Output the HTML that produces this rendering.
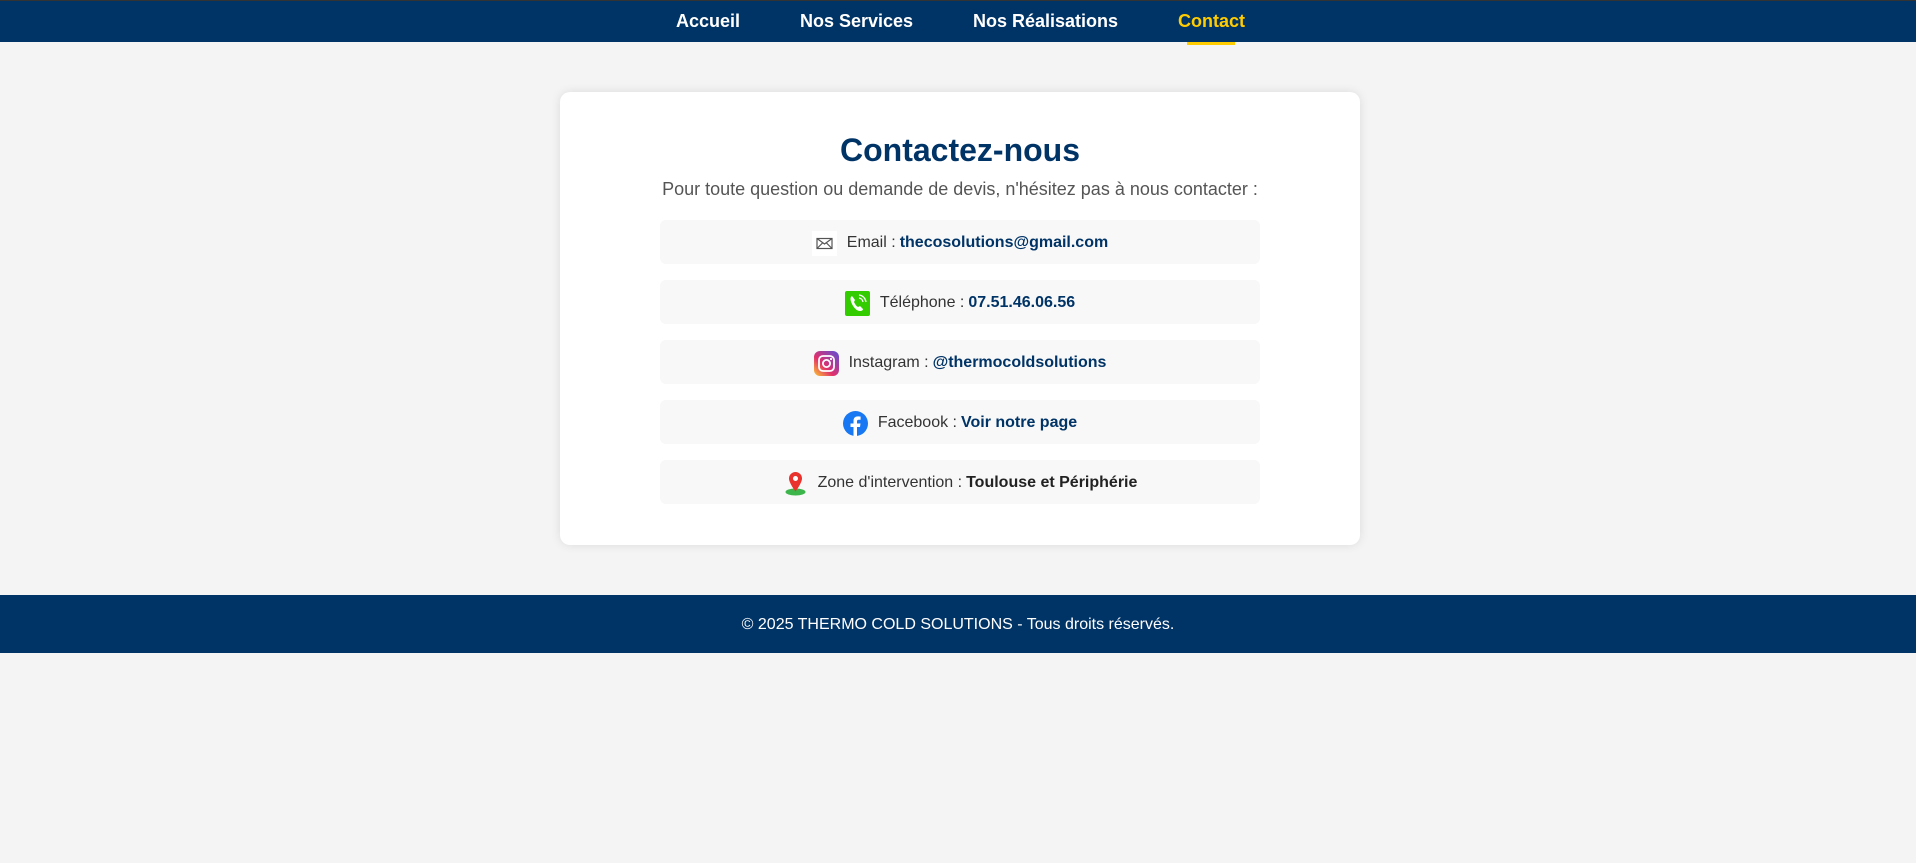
<!DOCTYPE html>
<html><head><meta charset="utf-8"><style>
*{margin:0;padding:0;box-sizing:border-box}
body{width:1916px;height:863px;background:#f4f4f4;font-family:"Liberation Sans",Arial,sans-serif;overflow:hidden}
nav{height:42px;background:#003366;border-top:1px solid #333;position:relative}
nav a{position:absolute;top:10px;font-size:18px;font-weight:bold;color:#fff;text-decoration:none}
nav a.act{color:#ffcc00}
.ul{position:absolute;left:1187px;top:42px;width:48px;height:3px;background:#ffcc00}
.card{position:absolute;left:560px;top:92px;width:800px;height:453px;background:#fff;border-radius:10px;box-shadow:0 0 10px rgba(0,0,0,0.1)}
h1{position:absolute;left:0;width:100%;text-align:center;top:39px;font-size:32px;color:#003366;line-height:38px}
.sub{position:absolute;top:86px;width:100%;text-align:center;font-size:18px;color:#555;line-height:22px}
.row{position:absolute;left:100px;width:600px;height:44px;background:#f8f8f8;border-radius:6px;display:flex;align-items:center;justify-content:center;font-size:16px;color:#333;padding-top:2px}
.row b{color:#003366;margin-left:4px}
.row b.d{color:#222}
.ic{width:25px;height:25px;margin-right:10px;display:inline-block}
footer{position:absolute;left:0;top:595px;width:1916px;height:58px;background:#003366;color:#fff;font-size:16px;text-align:center;line-height:60px}
</style></head><body>
<nav>
<a style="left:676px">Accueil</a>
<a style="left:800px">Nos Services</a>
<a style="left:973px">Nos Réalisations</a>
<a class="act" style="left:1178px">Contact</a>
</nav>
<div class="ul"></div>
<div class="card">
<h1>Contactez-nous</h1>
<div class="sub">Pour toute question ou demande de devis, n'hésitez pas à nous contacter :</div>
<div class="row" style="top:128px"><svg class="ic" viewBox="0 0 25 25"><rect width="25" height="25" fill="#fff"/><rect x="5" y="7.5" width="15" height="10" fill="none" stroke="#555" stroke-width="1.2"/><path d="M5 7.5L12.5 13L20 7.5M5 17.5L10.5 12M20 17.5L14.5 12" fill="none" stroke="#555" stroke-width="1.2"/></svg>Email :<b>thecosolutions@gmail.com</b></div>
<div class="row" style="top:188px"><svg class="ic" viewBox="0 0 25 25"><rect width="25" height="25" rx="2" fill="#33cc00"/><path d="M7 5c-2 1-2 4 0 8s5 7 8 7c2 0 3-1 3-2l-3-3-2 1c-2-1-3-3-4-5l1-2-3-4z" fill="#fff"/><path d="M14 7a5 5 0 0 1 4 4M14 4a8 8 0 0 1 7 7" fill="none" stroke="#fff" stroke-width="1.3"/></svg>Téléphone :<b>07.51.46.06.56</b></div>
<div class="row" style="top:248px"><svg class="ic" viewBox="0 0 25 25"><defs><linearGradient id="g" x1="0" y1="1" x2="1" y2="0"><stop offset="0" stop-color="#fdc830"/><stop offset=".4" stop-color="#e1306c"/><stop offset="1" stop-color="#5b51d8"/></linearGradient></defs><rect width="25" height="25" rx="6" fill="url(#g)"/><rect x="5" y="5" width="15" height="15" rx="4" fill="none" stroke="#fff" stroke-width="1.8"/><circle cx="12.5" cy="12.5" r="3.6" fill="none" stroke="#fff" stroke-width="1.8"/><circle cx="17" cy="8" r="1.1" fill="#fff"/></svg>Instagram :<b>@thermocoldsolutions</b></div>
<div class="row" style="top:308px"><svg class="ic" viewBox="0 0 25 25"><circle cx="12.5" cy="12.5" r="12.5" fill="#1877f2"/><path d="M14 25V16h3l.5-3.5H14v-2c0-1 .4-1.7 1.8-1.7h1.8V5.6c-.4 0-1.5-.2-2.7-.2-2.7 0-4.4 1.6-4.4 4.5v2.6H7.5V16h3v9z" fill="#fff"/></svg>Facebook :<b>Voir notre page</b></div>
<div class="row" style="top:368px"><svg class="ic" viewBox="0 0 25 25"><ellipse cx="12.5" cy="21" rx="10" ry="3.5" fill="#3cb54a"/><path d="M12.5 1a6.5 6.5 0 0 0-6.5 6.5c0 4.5 6.5 13 6.5 13s6.5-8.5 6.5-13A6.5 6.5 0 0 0 12.5 1z" fill="#e8322b"/><circle cx="12.5" cy="7.5" r="2.5" fill="#fff"/></svg>Zone d'intervention :<b class="d">Toulouse et Périphérie</b></div>
</div>
<footer>© 2025 THERMO COLD SOLUTIONS - Tous droits réservés.</footer>
</body></html>
